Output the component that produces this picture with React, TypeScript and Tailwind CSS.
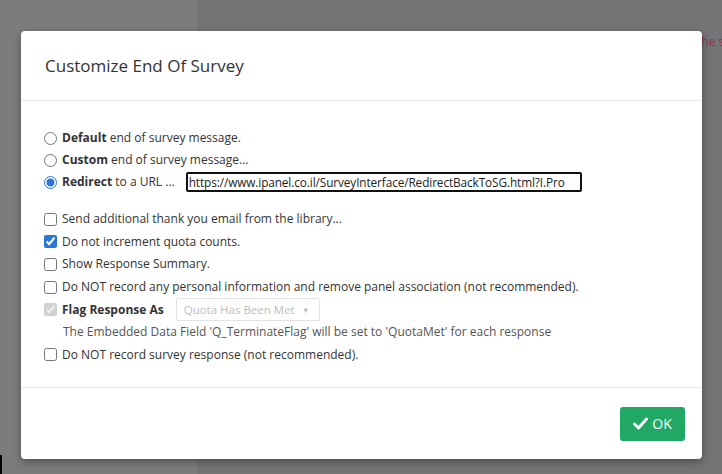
import React, { useState } from 'react';

const font = { fontFamily: '"Open Sans", "Liberation Sans", sans-serif' };

const CheckRow: React.FC<{ checked?: boolean; children: React.ReactNode }> = ({ checked = false, children }) => {
  const [on, setOn] = useState(checked);
  return (
    <label className="flex h-[22.6px] items-center gap-[5px]">
      <input
        type="checkbox"
        checked={on}
        onChange={() => setOn(!on)}
        className="m-0 h-[13px] w-[13px] accent-[#2a76d8]"
      />
      <span>{children}</span>
    </label>
  );
};

export default function App() {
  const [mode, setMode] = useState('redirect');
  const [url, setUrl] = useState('https://www.ipanel.co.il/SurveyInterface/RedirectBackToSG.html?I.Pro');

  return (
    <div
      className="relative h-[474px] w-[722px] overflow-hidden bg-[linear-gradient(to_right,#7c7c7c_197px,#747476_197px)] pl-[21px] pt-[31px]"
      style={font}
    >
      {/* page text peeking out behind the overlay */}
      <span className="absolute left-[697px] top-[33px] whitespace-nowrap text-[12px] text-[#8a3a4a]">the s</span>
      <div className="absolute bottom-0 left-0 h-[19px] w-[2px] bg-black" />

      <div className="relative flex h-[428px] w-[681px] flex-col rounded-[4px] bg-white shadow-[0_3px_8px_rgba(0,0,0,0.35)]">
        {/* Header */}
        <div className="flex h-[70px] items-center border-b border-[#ebebeb] px-[24px]">
          <h3 className="text-[17px] font-normal text-[#333]">Customize End Of Survey</h3>
        </div>

        {/* Body */}
        <div className="flex-1 px-[23px] pt-[26px] text-[12px] text-[#333]">
          <div className="flex flex-col">
            <label className="flex h-[22px] items-center gap-[5px]">
              <input
                type="radio"
                name="end"
                checked={mode === 'default'}
                onChange={() => setMode('default')}
                className="m-0 h-[13px] w-[13px] accent-[#2a76d8]"
              />
              <span><b>Default</b> end of survey message.</span>
            </label>
            <label className="flex h-[22px] items-center gap-[5px]">
              <input
                type="radio"
                name="end"
                checked={mode === 'custom'}
                onChange={() => setMode('custom')}
                className="m-0 h-[13px] w-[13px] accent-[#2a76d8]"
              />
              <span><b>Custom</b> end of survey message...</span>
            </label>
            <div className="flex h-[22px] items-center gap-[5px]">
              <input
                type="radio"
                name="end"
                checked={mode === 'redirect'}
                onChange={() => setMode('redirect')}
                className="m-0 h-[13px] w-[13px] accent-[#2a76d8]"
              />
              <span><b>Redirect</b> to a URL ...</span>
              <input
                type="text"
                value={url}
                onChange={(e) => setUrl(e.target.value)}
                className="ml-[6px] h-[20px] w-[396px] rounded-[2px] border-2 border-[#111] px-[1px] text-[11.8px] tracking-[-0.1px] text-[#222] outline-none"
              />
            </div>
          </div>

          <div className="mt-[15px] flex flex-col">
            <CheckRow>Send additional thank you email from the library...</CheckRow>
            <CheckRow checked>Do not increment quota counts.</CheckRow>
            <CheckRow>Show Response Summary.</CheckRow>
            <CheckRow>Do NOT record any personal information and remove panel association (not recommended).</CheckRow>
            <div className="flex h-[22.6px] items-center gap-[5px]">
              <input type="checkbox" checked disabled readOnly className="m-0 h-[13px] w-[13px]" />
              <b>Flag Response As</b>
              <div className="ml-[7px] flex h-[23px] w-[144px] items-center gap-[7px] rounded-[2px] border border-[#e2e2e2] px-[7px] text-[11.5px] text-[#bdbdbd]">
                <span>Quota Has Been Met</span>
                <span className="text-[8px]">▼</span>
              </div>
            </div>
            <div className="flex h-[22.6px] items-center pl-[19px] text-[#555]">
              The Embedded Data Field 'Q_TerminateFlag' will be set to 'QuotaMet' for each response
            </div>
            <CheckRow>Do NOT record survey response (not recommended).</CheckRow>
          </div>
        </div>

        {/* Footer */}
        <div className="flex h-[72px] items-center justify-end border-t border-[#ebebeb] pr-[17px]">
          <button className="flex h-[34px] w-[65px] items-center justify-center gap-[4px] rounded-[3px] bg-[#21a865] text-[14px] text-white">
            <svg width="15" height="13" viewBox="0 0 15 13" fill="none">
              <path d="M1.5 7 L5.5 11 L13.5 2" stroke="white" strokeWidth="2.8" strokeLinecap="round" strokeLinejoin="round" />
            </svg>
            OK
          </button>
        </div>
      </div>
    </div>
  );
}
